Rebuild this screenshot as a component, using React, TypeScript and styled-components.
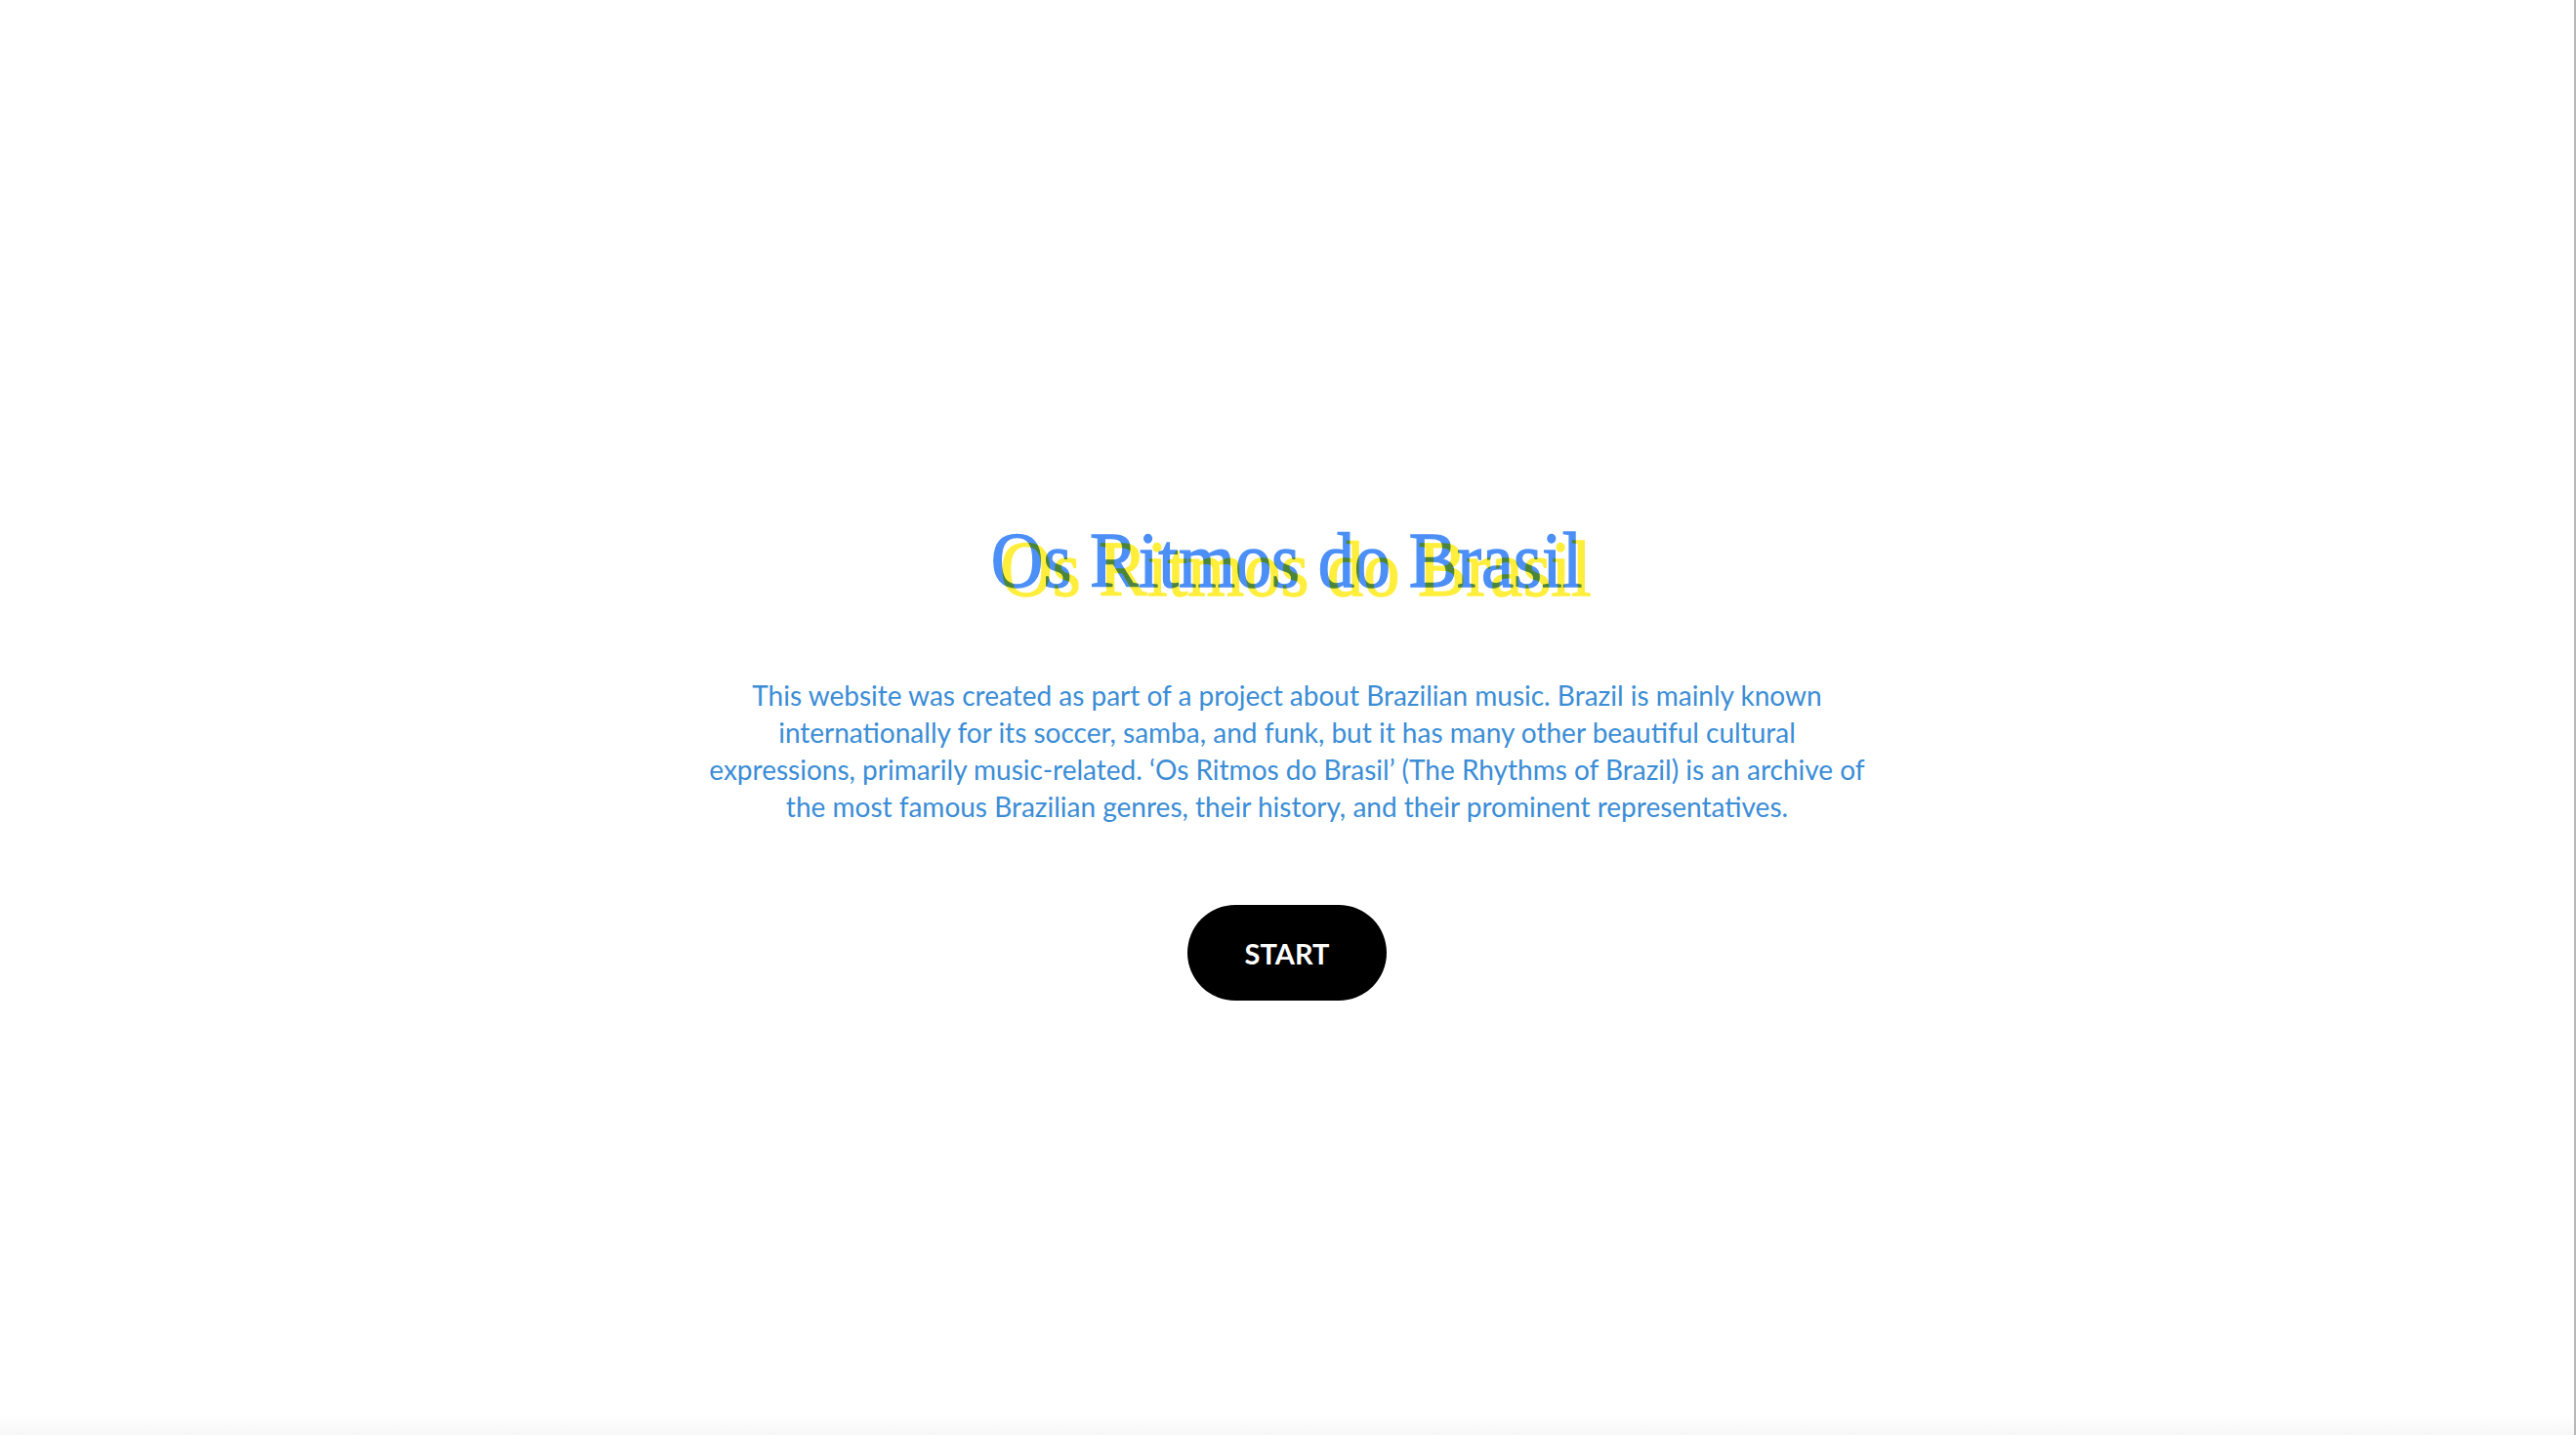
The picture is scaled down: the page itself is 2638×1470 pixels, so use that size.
import styled, { createGlobalStyle } from 'styled-components'

const GlobalStyle = createGlobalStyle`
  html, body {
    margin: 0;
    padding: 0;
    background-color: #ffffff;
  }
`

const Page = styled.main`
  box-sizing: border-box;
  min-height: 100vh;
  display: flex;
  flex-direction: column;
  align-items: center;
  padding-top: 534px;
  border-right: 2px solid #b9b9b9;
  background: linear-gradient(to bottom, #ffffff calc(100% - 20px), #f7f7f7 100%);
`

const TitleStack = styled.h1`
  display: grid;
  margin: 0;
  font-family: 'Liberation Serif', 'DejaVu Serif', serif;
  font-size: 80px;
  font-weight: 400;
  line-height: 1;
  transform: scaleX(0.93);
  isolation: isolate;
`

const TitleLayer = styled.span<{ $color: string; $shift?: boolean }>`
  grid-area: 1 / 1;
  color: ${(p) => p.$color};
  white-space: nowrap;
  transform: ${(p) => (p.$shift ? 'translate(10px, 9px)' : 'none')};
  mix-blend-mode: multiply;
  -webkit-text-stroke: 1.3px ${(p) => p.$color};
`

const Intro = styled.p`
  margin: 79px 0 0;
  font-family: Lato, 'Open Sans', sans-serif;
  font-size: 28px;
  line-height: 38px;
  color: #3b8dd6;
  text-align: center;
`

const StartButton = styled.button`
  margin-top: 82px;
  width: 204px;
  height: 98px;
  border: none;
  border-radius: 49px;
  background-color: #000000;
  color: #ffffff;
  font-family: Lato, 'Open Sans', sans-serif;
  font-size: 29px;
  font-weight: 700;
  cursor: pointer;
`

const title = 'Os Ritmos do Brasil'

const lines = [
  'This website was created as part of a project about Brazilian music. Brazil is mainly known',
  'internationally for its soccer, samba, and funk, but it has many other beautiful cultural',
  'expressions, primarily music-related. \u2018Os Ritmos do Brasil\u2019 (The Rhythms of Brazil) is an archive of',
  'the most famous Brazilian genres, their history, and their prominent representatives.',
]

export default function App() {
  return (
    <>
      <GlobalStyle />
      <Page>
        <TitleStack>
          <TitleLayer $color="#ffee3c" $shift aria-hidden="true">
            {title}
          </TitleLayer>
          <TitleLayer $color="#4b8ff7">{title}</TitleLayer>
        </TitleStack>
        <Intro>
          {lines.map((line, i) => (
            <span key={i}>
              {line}
              {i < lines.length - 1 && <br />}
            </span>
          ))}
        </Intro>
        <StartButton>START</StartButton>
      </Page>
    </>
  )
}
